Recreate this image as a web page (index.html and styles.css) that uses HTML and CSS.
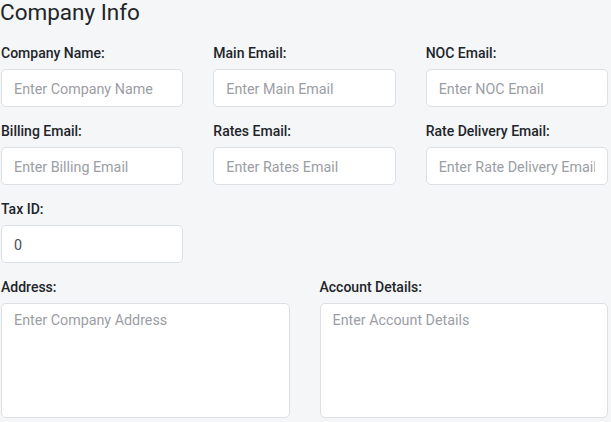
FILE: index.html
```html
<!DOCTYPE html>
<html>
<head>
<meta charset="utf-8">
<link rel="stylesheet" href="styles.css">
</head>
<body>
<div class="page">
  <h4 class="title">Company Info</h4>
  <div class="grid three">
    <div class="field">
      <label class="label">Company Name:</label>
      <input class="control" type="text" placeholder="Enter Company Name">
    </div>
    <div class="field">
      <label class="label">Main Email:</label>
      <input class="control" type="text" placeholder="Enter Main Email">
    </div>
    <div class="field">
      <label class="label">NOC Email:</label>
      <input class="control" type="text" placeholder="Enter NOC Email">
    </div>
    <div class="field">
      <label class="label">Billing Email:</label>
      <input class="control" type="text" placeholder="Enter Billing Email">
    </div>
    <div class="field">
      <label class="label">Rates Email:</label>
      <input class="control" type="text" placeholder="Enter Rates Email">
    </div>
    <div class="field">
      <label class="label">Rate Delivery Email:</label>
      <input class="control" type="text" placeholder="Enter Rate Delivery Email">
    </div>
    <div class="field">
      <label class="label">Tax ID:</label>
      <input class="control" type="text" value="0">
    </div>
  </div>
  <div class="grid two">
    <div class="field">
      <label class="label">Address:</label>
      <textarea class="control area" placeholder="Enter Company Address"></textarea>
    </div>
    <div class="field">
      <label class="label">Account Details:</label>
      <textarea class="control area" placeholder="Enter Account Details"></textarea>
    </div>
  </div>
</div>
</body>
</html>
```

FILE: styles.css
```css
html, body {
  margin: 0;
  padding: 0;
  background: #f5f6f8;
}
body {
  font-family: Roboto, "Liberation Sans", Arial, sans-serif;
  color: #212529;
  overflow: hidden;
}
.page {
  width: 607px;
  padding-left: 1px;
}
.title {
  margin: 0 0 19px -1px;
  font-size: 22.5px;
  font-weight: 400;
  line-height: 24px;
  color: #212529;
}
.grid {
  display: grid;
  column-gap: 30px;
  row-gap: 14px;
}
.three {
  grid-template-columns: repeat(3, 1fr);
}
.two {
  grid-template-columns: repeat(2, 1fr);
  margin-top: 14px;
}
.field {
  display: flex;
  flex-direction: column;
  min-width: 0;
}
.label {
  display: block;
  font-size: 14px;
  font-weight: 500;
  line-height: 21px;
  margin: 0 0 5px 0;
  color: #212529;
}
.control {
  box-sizing: border-box;
  width: 100%;
  height: 38px;
  margin: 0;
  padding: 8px 12px 6px;
  font-family: Roboto, "Liberation Sans", Arial, sans-serif;
  font-size: 14.3px;
  line-height: 21px;
  color: #495057;
  background: #ffffff;
  border: 1px solid #dcdfe3;
  border-radius: 5px;
  outline: none;
}
.control::placeholder {
  color: #9b9ea4;
  opacity: 1;
}
.area {
  height: 115px;
  padding: 6px 12px;
  resize: none;
  display: block;
}
```
